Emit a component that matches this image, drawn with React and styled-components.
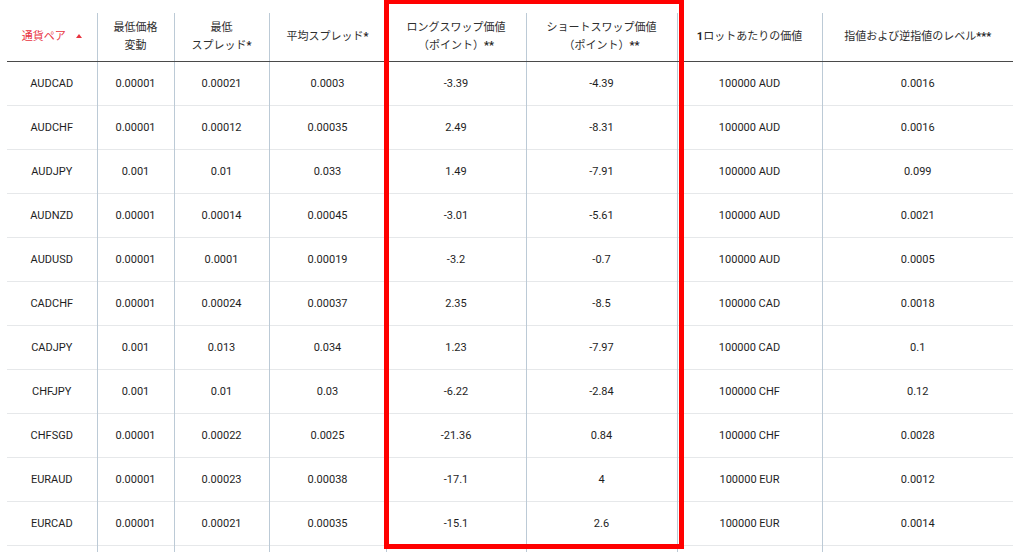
import React from 'react';
import styled, { createGlobalStyle } from 'styled-components';

const GlobalStyle = createGlobalStyle`
    html, body {
        margin: 0;
        padding: 0;
        background: #FFFFFF;
    }
    body {
        font-family: Roboto, "Noto Sans CJK JP", "Noto Sans", sans-serif;
        overflow: hidden;
    }
`;

const Wrapper = styled.section`
    position: relative;
    height: 552px;
    padding: 13px 0 0 7px;
    box-sizing: border-box;
    overflow: hidden;
`;

const Table = styled.table`
    width: 1006px;
    border-collapse: collapse;
    table-layout: fixed;
`;

const HeadCell = styled.th`
    height: 48px;
    padding: 0 6px;
    font-size: 11px;
    line-height: 18px;
    font-weight: 400;
    color: ${p => (p.$active ? '#e8333f' : '#2e2e2e')};
    text-align: center;
    vertical-align: middle;
    border-bottom: 1px solid #4a4a4a;
    border-left: ${p => (p.$first ? 'none' : '1px solid #bccad6')};
`;

const Strong = styled.b`
    font-weight: 700;
    color: #222;
`;

const SortArrow = styled.span`
    display: inline-block;
    width: 0;
    height: 0;
    margin-left: 10px;
    vertical-align: 2px;
    border-left: 3px solid transparent;
    border-right: 3px solid transparent;
    border-bottom: 4px solid #e8333f;
`;

const Row = styled.tr`
    border-bottom: 1px solid #e6e8ea;
`;

const Cell = styled.td`
    height: ${p => (p.$filler ? '20px' : '43px')};
    padding: 0 6px;
    font-size: 11px;
    color: #1e1e1e;
    text-align: center;
    vertical-align: middle;
    white-space: nowrap;
    border-left: ${p => (p.$first ? 'none' : '1px solid #bccad6')};
`;

const Highlight = styled.div`
    position: absolute;
    left: 384px;
    top: -1px;
    width: 300px;
    height: 550px;
    border: 5px solid #ff0000;
    box-sizing: border-box;
    pointer-events: none;
`;

const widths = [90, 77, 95, 117, 140, 151, 145, 191];

const rows = [
    ['AUDCAD', '0.00001', '0.00021', '0.0003', '-3.39', '-4.39', '100000 AUD', '0.0016'],
    ['AUDCHF', '0.00001', '0.00012', '0.00035', '2.49', '-8.31', '100000 AUD', '0.0016'],
    ['AUDJPY', '0.001', '0.01', '0.033', '1.49', '-7.91', '100000 AUD', '0.099'],
    ['AUDNZD', '0.00001', '0.00014', '0.00045', '-3.01', '-5.61', '100000 AUD', '0.0021'],
    ['AUDUSD', '0.00001', '0.0001', '0.00019', '-3.2', '-0.7', '100000 AUD', '0.0005'],
    ['CADCHF', '0.00001', '0.00024', '0.00037', '2.35', '-8.5', '100000 CAD', '0.0018'],
    ['CADJPY', '0.001', '0.013', '0.034', '1.23', '-7.97', '100000 CAD', '0.1'],
    ['CHFJPY', '0.001', '0.01', '0.03', '-6.22', '-2.84', '100000 CHF', '0.12'],
    ['CHFSGD', '0.00001', '0.00022', '0.0025', '-21.36', '0.84', '100000 CHF', '0.0028'],
    ['EURAUD', '0.00001', '0.00023', '0.00038', '-17.1', '4', '100000 EUR', '0.0012'],
    ['EURCAD', '0.00001', '0.00021', '0.00035', '-15.1', '2.6', '100000 EUR', '0.0014'],
];

function App() {
    return (
        <Wrapper>
            <GlobalStyle />
            <Table>
                <colgroup>
                    {widths.map((w, i) => <col key={i} style={{ width: w }} />)}
                </colgroup>
                <thead>
                    <tr>
                        <HeadCell $first $active>通貨ペア<SortArrow /></HeadCell>
                        <HeadCell>最低価格<br />変動</HeadCell>
                        <HeadCell>最低<br />スプレッド<Strong>*</Strong></HeadCell>
                        <HeadCell>平均スプレッド<Strong>*</Strong></HeadCell>
                        <HeadCell>ロングスワップ価値<br />（ポイント）<Strong>**</Strong></HeadCell>
                        <HeadCell>ショートスワップ価値<br />（ポイント）<Strong>**</Strong></HeadCell>
                        <HeadCell><Strong>1</Strong>ロットあたりの価値</HeadCell>
                        <HeadCell>指値および逆指値のレベル<Strong>***</Strong></HeadCell>
                    </tr>
                </thead>
                <tbody>
                    {rows.map((r, i) =>
                        <Row key={i}>
                            {r.map((v, j) => <Cell key={j} $first={j === 0}>{v}</Cell>)}
                        </Row>
                    )}
                    <tr>
                        {widths.map((w, j) => <Cell key={j} $filler $first={j === 0} />)}
                    </tr>
                </tbody>
            </Table>
            <Highlight />
        </Wrapper>
    );
}

export default App;
